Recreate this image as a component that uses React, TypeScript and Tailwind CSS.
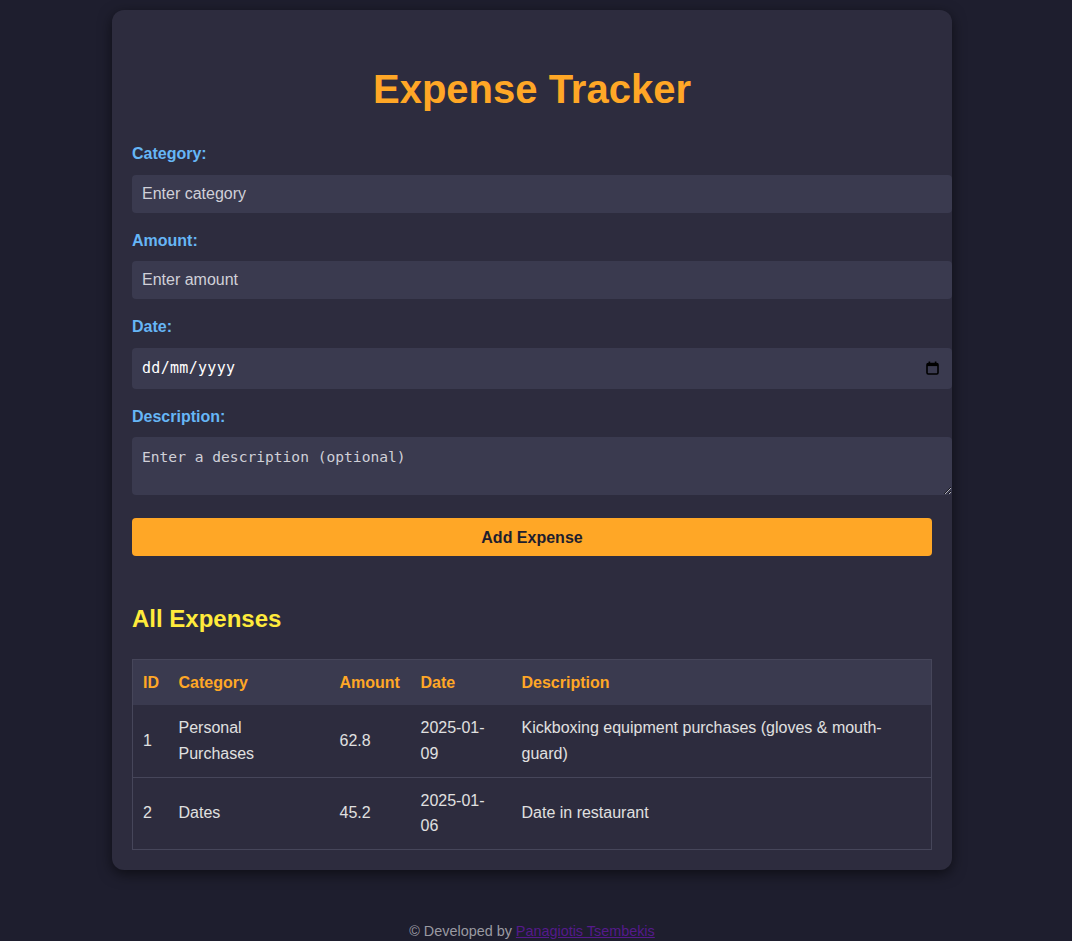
import React from 'react';

interface Expense {
  id: number;
  category: string;
  amount: number;
  date: string;
  description: string;
}

const expenses: Expense[] = [
  {
    id: 1,
    category: 'Personal Purchases',
    amount: 62.8,
    date: '2025-01-09',
    description: 'Kickboxing equipment purchases (gloves & mouth-guard)',
  },
  { id: 2, category: 'Dates', amount: 45.2, date: '2025-01-06', description: 'Date in restaurant' },
];

const labelClass = 'block mb-2 font-bold text-[#66b6f6] leading-[1.6]';
const inputClass =
  'block w-[820px] h-[38px] px-[10px] mb-[15px] rounded-[4px] bg-[#3a3a4f] text-white outline-none placeholder:text-[#d0d0d8]';

const DateField: React.FC = () => (
  <div className="flex w-[820px] h-[41px] mb-[15px] items-center justify-between rounded-[4px] bg-[#3a3a4f] pl-[10px] pr-[13px] text-white">
    <span className="text-[15px] font-['DejaVu_Sans_Mono',monospace] tracking-[0.3px]">dd/mm/yyyy</span>
    <svg width="13" height="14" viewBox="0 0 13 14">
      <rect x="1" y="2.5" width="11" height="10.5" rx="1.2" fill="none" stroke="#000" strokeWidth="1.6" />
      <rect x="1" y="2.5" width="11" height="2.6" fill="#000" />
      <rect x="2.6" y="0.5" width="1.6" height="2.5" fill="#000" />
      <rect x="8.8" y="0.5" width="1.6" height="2.5" fill="#000" />
    </svg>
  </div>
);

const App: React.FC = () => {
  return (
    <div className="min-h-screen bg-[#1e1e2e] pt-[10px] pr-2 text-base leading-[1.6] text-[#e0e0e0] font-['Liberation_Sans',Arial,sans-serif]">
      <div className="mx-auto w-[840px] rounded-xl bg-[#2d2c3e] p-5 shadow-[0_4px_14px_rgba(0,0,0,0.55)]">
        <h1 className="mt-[27px] mb-5 text-center text-[40px] font-bold leading-[64px] text-[#ffa726]">
          Expense Tracker
        </h1>

        <form onSubmit={(e) => e.preventDefault()}>
          <label className={labelClass}>Category:</label>
          <input type="text" placeholder="Enter category" className={inputClass} />

          <label className={labelClass}>Amount:</label>
          <input type="number" placeholder="Enter amount" className={inputClass} />

          <label className={labelClass}>Date:</label>
          <DateField />

          <label className={labelClass}>Description:</label>
          <textarea
            rows={2}
            placeholder="Enter a description (optional)"
            className="block w-[820px] h-[58px] px-[10px] pt-[11px] pb-[9px] mb-[23px] rounded-[4px] bg-[#3a3a4f] text-white outline-none text-[14.6px] leading-[1.3] font-['DejaVu_Sans_Mono',monospace] placeholder:text-[#d0d0d8]"
          />

          <button
            type="submit"
            className="block w-[800px] h-[38px] rounded-[4px] bg-[#ffa726] font-bold text-[#1e1e2e]"
          >
            Add Expense
          </button>
        </form>

        <h2 className="mt-[44px] mb-5 text-2xl font-bold leading-[1.6] text-[#ffeb3b]">All Expenses</h2>

        <table className="w-[800px] table-fixed border-collapse border border-[#46465a]">
          <colgroup>
            <col className="w-[36px]" />
            <col className="w-[161px]" />
            <col className="w-[81px]" />
            <col className="w-[101px]" />
            <col />
          </colgroup>
          <thead>
            <tr className="bg-[#3a3a4f]">
              {['ID', 'Category', 'Amount', 'Date', 'Description'].map((h) => (
                <th key={h} className="p-[10px] text-left font-bold text-[#ffa726]">
                  {h}
                </th>
              ))}
            </tr>
          </thead>
          <tbody>
            {expenses.map((exp) => (
              <tr key={exp.id} className="border-b border-[#46465a]">
                <td className="p-[10px] align-middle">{exp.id}</td>
                <td className="p-[10px] align-middle">{exp.category}</td>
                <td className="p-[10px] align-middle">{exp.amount}</td>
                <td className="p-[10px] align-middle">{exp.date}</td>
                <td className="p-[10px] align-middle">{exp.description}</td>
              </tr>
            ))}
          </tbody>
        </table>
      </div>

      <footer className="mt-[50px] text-center text-[14.4px] leading-[1.6] text-[#9a9aa2]">
        © Developed by{' '}
        <a href="#" className="text-[#551a8b] underline">
          Panagiotis Tsembekis
        </a>
      </footer>
    </div>
  );
};

export default App;
